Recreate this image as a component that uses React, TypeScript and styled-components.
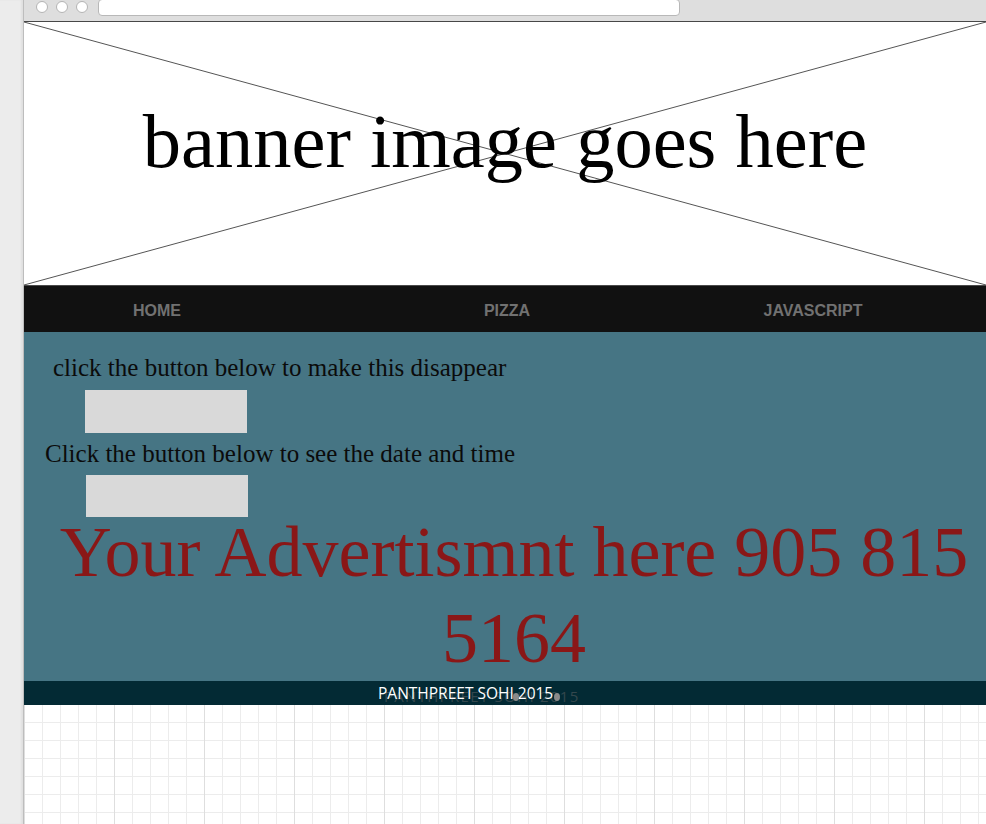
import React from 'react';
import styled, { createGlobalStyle } from 'styled-components';

const GlobalStyle = createGlobalStyle`
  html, body {
    margin: 0;
    padding: 0;
    background: #ffffff;
    overflow: hidden;
  }
  * {
    box-sizing: border-box;
  }
`;

const Page = styled.div`
  display: flex;
  width: 986px;
  height: 824px;
  overflow: hidden;
`;

const SideStrip = styled.div`
  width: 24px;
  flex: none;
  background: #ececec;
  border-right: 1px solid #bdbdbd;
  box-shadow: inset -2px 0 2px rgba(0, 0, 0, 0.05);
`;

const Frame = styled.div`
  flex: 1;
  display: flex;
  flex-direction: column;
  min-width: 0;
`;

const Chrome = styled.div`
  height: 22px;
  flex: none;
  background: #dedede;
  border-bottom: 1px solid #474747;
  display: flex;
  align-items: flex-start;
  padding-left: 12px;
  gap: 8px;
`;

const Dot = styled.span`
  width: 12px;
  height: 12px;
  margin-top: 1px;
  border-radius: 50%;
  background: #ffffff;
  border: 1px solid #b4b4b4;
`;

const UrlBox = styled.div`
  width: 582px;
  height: 17px;
  margin-top: -1px;
  margin-left: 2px;
  background: #ffffff;
  border: 1px solid #b8b8b8;
  border-radius: 4px;
`;

const Banner = styled.div`
  position: relative;
  height: 264px;
  flex: none;
  background: #ffffff;
  border-bottom: 1px solid #4a4a4a;
  padding-top: 76px;
  text-align: center;
`;

const Cross = styled.svg`
  position: absolute;
  inset: 0;
  width: 100%;
  height: 100%;
`;

const BannerText = styled.div`
  position: relative;
  font-family: 'Liberation Serif', 'Times New Roman', serif;
  font-size: 76.5px;
  line-height: 88px;
  color: #000000;
`;

const Nav = styled.nav`
  height: 46px;
  flex: none;
  background: #111111;
  display: grid;
  grid-template-columns: 266px 434px 178px 1fr;
  align-items: center;
`;

const NavItem = styled.a`
  text-align: center;
  font-family: 'Liberation Sans', Arial, sans-serif;
  font-weight: 700;
  font-size: 16px;
  color: #717171;
  text-decoration: none;
  margin-top: 3px;
`;

const Main = styled.main`
  height: 349px;
  flex: none;
  background: #467584;
  padding-top: 21px;
  display: flex;
  flex-direction: column;
  align-items: flex-start;
`;

const Line = styled.p<{ $indent: number; $gap: number }>`
  margin: ${p => p.$gap}px 0 0 ${p => p.$indent}px;
  font-family: 'Liberation Serif', 'Times New Roman', serif;
  font-size: 25px;
  line-height: 29px;
  color: #0b0b0b;
`;

const BlankButton = styled.button<{ $indent: number; $gap: number }>`
  margin: ${p => p.$gap}px 0 0 ${p => p.$indent}px;
  width: 162px;
  height: 44px;
  border: none;
  background: #d9d9d9;
  padding: 0;
`;

const Advert = styled.h1`
  align-self: stretch;
  margin: -8px 0 0 0;
  padding-left: 18px;
  text-align: center;
  font-family: 'Liberation Serif', 'Times New Roman', serif;
  font-weight: 400;
  font-size: 72px;
  line-height: 86px;
  color: #8a1717;
`;

const Footer = styled.footer`
  position: relative;
  height: 24px;
  flex: none;
  background: #032a34;
  padding-left: 354px;
  display: flex;
  align-items: center;
`;

const FooterText = styled.span`
  position: relative;
  font-family: 'Open Sans', 'Noto Sans', sans-serif;
  font-size: 15.5px;
  color: #ffffff;
  white-space: nowrap;
`;

const GhostText = styled.span`
  position: absolute;
  left: 360px;
  top: 5px;
  font-family: 'Open Sans', 'Noto Sans', sans-serif;
  font-size: 15px;
  letter-spacing: 1.3px;
  color: #34474d;
  white-space: nowrap;
`;

const Blob = styled.span<{ $x: number }>`
  position: absolute;
  left: ${p => p.$x}px;
  top: 12px;
  width: 6px;
  height: 8px;
  border-radius: 50%;
  background: #8a8a8a;
  filter: blur(0.6px);
`;

const GridArea = styled.div`
  flex: 1;
  background-color: #ffffff;
  background-image:
    linear-gradient(to right, #dedede 1px, transparent 1px),
    linear-gradient(to right, #ececec 1px, transparent 1px),
    linear-gradient(to bottom, #ececec 1px, transparent 1px);
  background-size: 90px 100%, 18px 100%, 100% 18px;
  background-position: 0 0, 0 0, 0 17px;
`;

const navLinks = ['HOME', 'PIZZA', 'JAVASCRIPT'];

export default function App() {
  return (
    <>
      <GlobalStyle />
      <Page>
        <SideStrip />
        <Frame>
          <Chrome>
            <Dot />
            <Dot />
            <Dot />
            <UrlBox />
          </Chrome>
          <Banner>
            <Cross viewBox="0 0 100 100" preserveAspectRatio="none">
              <line x1="0" y1="0" x2="100" y2="100" stroke="#555" strokeWidth="1" vectorEffect="non-scaling-stroke" />
              <line x1="100" y1="0" x2="0" y2="100" stroke="#555" strokeWidth="1" vectorEffect="non-scaling-stroke" />
            </Cross>
            <BannerText>banner image goes here</BannerText>
          </Banner>
          <Nav>
            {navLinks.map(link => (
              <NavItem key={link} href="#">{link}</NavItem>
            ))}
          </Nav>
          <Main>
            <Line $indent={29} $gap={0}>click the button below to make this disappear</Line>
            <BlankButton $indent={61} $gap={8} />
            <Line $indent={21} $gap={6}>Click the button below to see the date and time</Line>
            <BlankButton $indent={62} $gap={7} />
            <Advert>Your Advertismnt here 905 815 5164</Advert>
          </Main>
          <Footer>
            <GhostText>PANTHPREET SOHI 2015</GhostText>
            <FooterText>PANTHPREET SOHI 2015</FooterText>
            <Blob $x={489} />
            <Blob $x={530} />
          </Footer>
          <GridArea />
        </Frame>
      </Page>
    </>
  );
}
